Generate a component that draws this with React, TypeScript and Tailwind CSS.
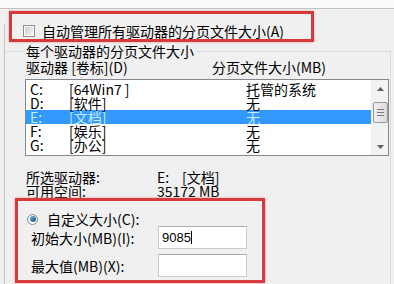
import React from 'react'

const drives = [
  { letter: 'C:', label: '[64Win7 ]', size: '托管的系统' },
  { letter: 'D:', label: '[软件]', size: '无' },
  { letter: 'E:', label: '[文档]', size: '无', selected: true },
  { letter: 'F:', label: '[娱乐]', size: '无' },
  { letter: 'G:', label: '[办公]', size: '无' },
]

function Checkbox() {
  return (
    <div className="w-[12px] h-[12px] border border-[#8e8f8f] bg-white flex items-center justify-center">
      <div className="w-[8px] h-[8px] bg-gradient-to-br from-[#cfcfcf] to-[#f6f6f6]" />
    </div>
  )
}

function Radio() {
  return (
    <div className="w-[11px] h-[11px] rounded-full border border-[#8a8f94] bg-gradient-to-br from-[#e8eaec] to-[#ffffff] flex items-center justify-center">
      <div className="w-[6px] h-[6px] rounded-full bg-gradient-to-br from-[#6fb3e0] to-[#1d4f7a]" />
    </div>
  )
}

function Scrollbar() {
  return (
    <div className="w-[17px] flex flex-col items-center bg-[#f2f2f2] border-l border-[#ececec]">
      {/* up arrow */}
      <div className="h-[17px] w-full flex items-center justify-center">
        <svg width="7" height="4" viewBox="0 0 7 4">
          <path d="M0 4 L3.5 0 L7 4 Z" fill="#5d5d5d" />
        </svg>
      </div>
      {/* thumb */}
      <div className="mt-[5px] w-[15px] h-[21px] rounded-[2px] border border-[#979797] bg-gradient-to-r from-[#f0f0f0] to-[#dcdcdc] flex flex-col items-center justify-center gap-[2px]">
        <div className="w-[7px] h-[1px] bg-[#7a7a7a]" />
        <div className="w-[7px] h-[1px] bg-[#7a7a7a]" />
        <div className="w-[7px] h-[1px] bg-[#7a7a7a]" />
      </div>
      <div className="flex-1" />
      {/* down arrow */}
      <div className="h-[17px] w-full flex items-center justify-center">
        <svg width="7" height="4" viewBox="0 0 7 4">
          <path d="M0 0 L3.5 4 L7 0 Z" fill="#5d5d5d" />
        </svg>
      </div>
    </div>
  )
}

export default function App() {
  return (
    <div className="relative w-[394px] h-[284px] overflow-hidden bg-[#f0f0f0] text-[14px] leading-[14px] text-black font-['Noto_Sans_CJK_SC','Noto_Sans',sans-serif]">
      {/* window top strip */}
      <div className="h-[9px] bg-[#f9fafb] border-b border-[#c2c2c2]" />

      <div className="ml-[4px] border-l border-[#c2c2c2] h-[275px]">
        {/* auto manage checkbox */}
        <div className="mt-[15px] h-[14px] pl-[18px] flex items-center">
          <Checkbox />
          <span className="ml-[7px]">自动管理所有驱动器的分页文件大小(A)</span>
        </div>

        {/* group box */}
        <fieldset className="mt-[6px] mr-[3px] border-t border-r border-[#d5dbe0] pl-[20px] pb-[12px]">
          <legend className="-ml-[1px] px-[2px] h-[14px] leading-[14px]">每个驱动器的分页文件大小</legend>

          <div className="mt-[2px] h-[14px] pl-[1px] flex items-center">
            <span className="w-[186px]">驱动器 [卷标](D)</span>
            <span>分页文件大小(MB)</span>
          </div>

          {/* drive list */}
          <div className="mt-[5px] h-[77px] w-[364px] border border-[#828790] bg-white flex">
            <div className="flex-1 pt-[2px]">
              {drives.map((d) => (
                <div
                  key={d.letter}
                  className={
                    d.selected
                      ? 'h-[14px] flex items-center bg-[#3399ff] text-[#c8ecff]'
                      : 'h-[14px] flex items-center'
                  }
                >
                  <span className="w-[43px] pl-[4px]">{d.letter}</span>
                  <span className="w-[177px]">{d.label}</span>
                  <span>{d.size}</span>
                </div>
              ))}
            </div>
            <Scrollbar />
          </div>

          {/* selected drive info */}
          <div className="mt-[14px] pl-[1px]">
            <div className="h-[14px] flex items-center">
              <span className="w-[131px]">所选驱动器:</span>
              <span className="w-[25px]">E:</span>
              <span>[文档]</span>
            </div>
            <div className="h-[14px] flex items-center">
              <span className="w-[131px]">可用空间:</span>
              <span>35172 MB</span>
            </div>
          </div>

          {/* custom size */}
          <div className="mt-[14px] h-[14px] pl-[2px] flex items-center">
            <Radio />
            <span className="ml-[9px]">自定义大小(C):</span>
          </div>
          <div className="h-[23px] pl-[6px] flex items-center">
            <span className="w-[127px]">初始大小(MB)(I):</span>
            <div className="w-[89px] h-[23px] bg-white border border-[#c8ccd1] border-t-[#abadb3] flex items-center pl-[3px] text-[13px] font-['Liberation_Sans',sans-serif]">
              <span>9085</span>
              <span className="w-[1px] h-[13px] bg-black" />
            </div>
          </div>
          <div className="mt-[5px] h-[23px] pl-[6px] flex items-center">
            <span className="w-[127px]">最大值(MB)(X):</span>
            <div className="w-[89px] h-[23px] bg-white border border-[#c8ccd1] border-t-[#abadb3]" />
          </div>
        </fieldset>
      </div>

      {/* red annotation boxes */}
      <div className="absolute left-[9px] top-[11px] w-[305px] h-[31px] border-[3px] border-[#d63a3a] shadow-[0_0_2px_#eb8a8a]" />
      <div className="absolute left-[15px] top-[198px] w-[250px] h-[85px] border-[3px] border-[#d63a3a] shadow-[0_0_2px_#eb8a8a]" />
    </div>
  )
}
